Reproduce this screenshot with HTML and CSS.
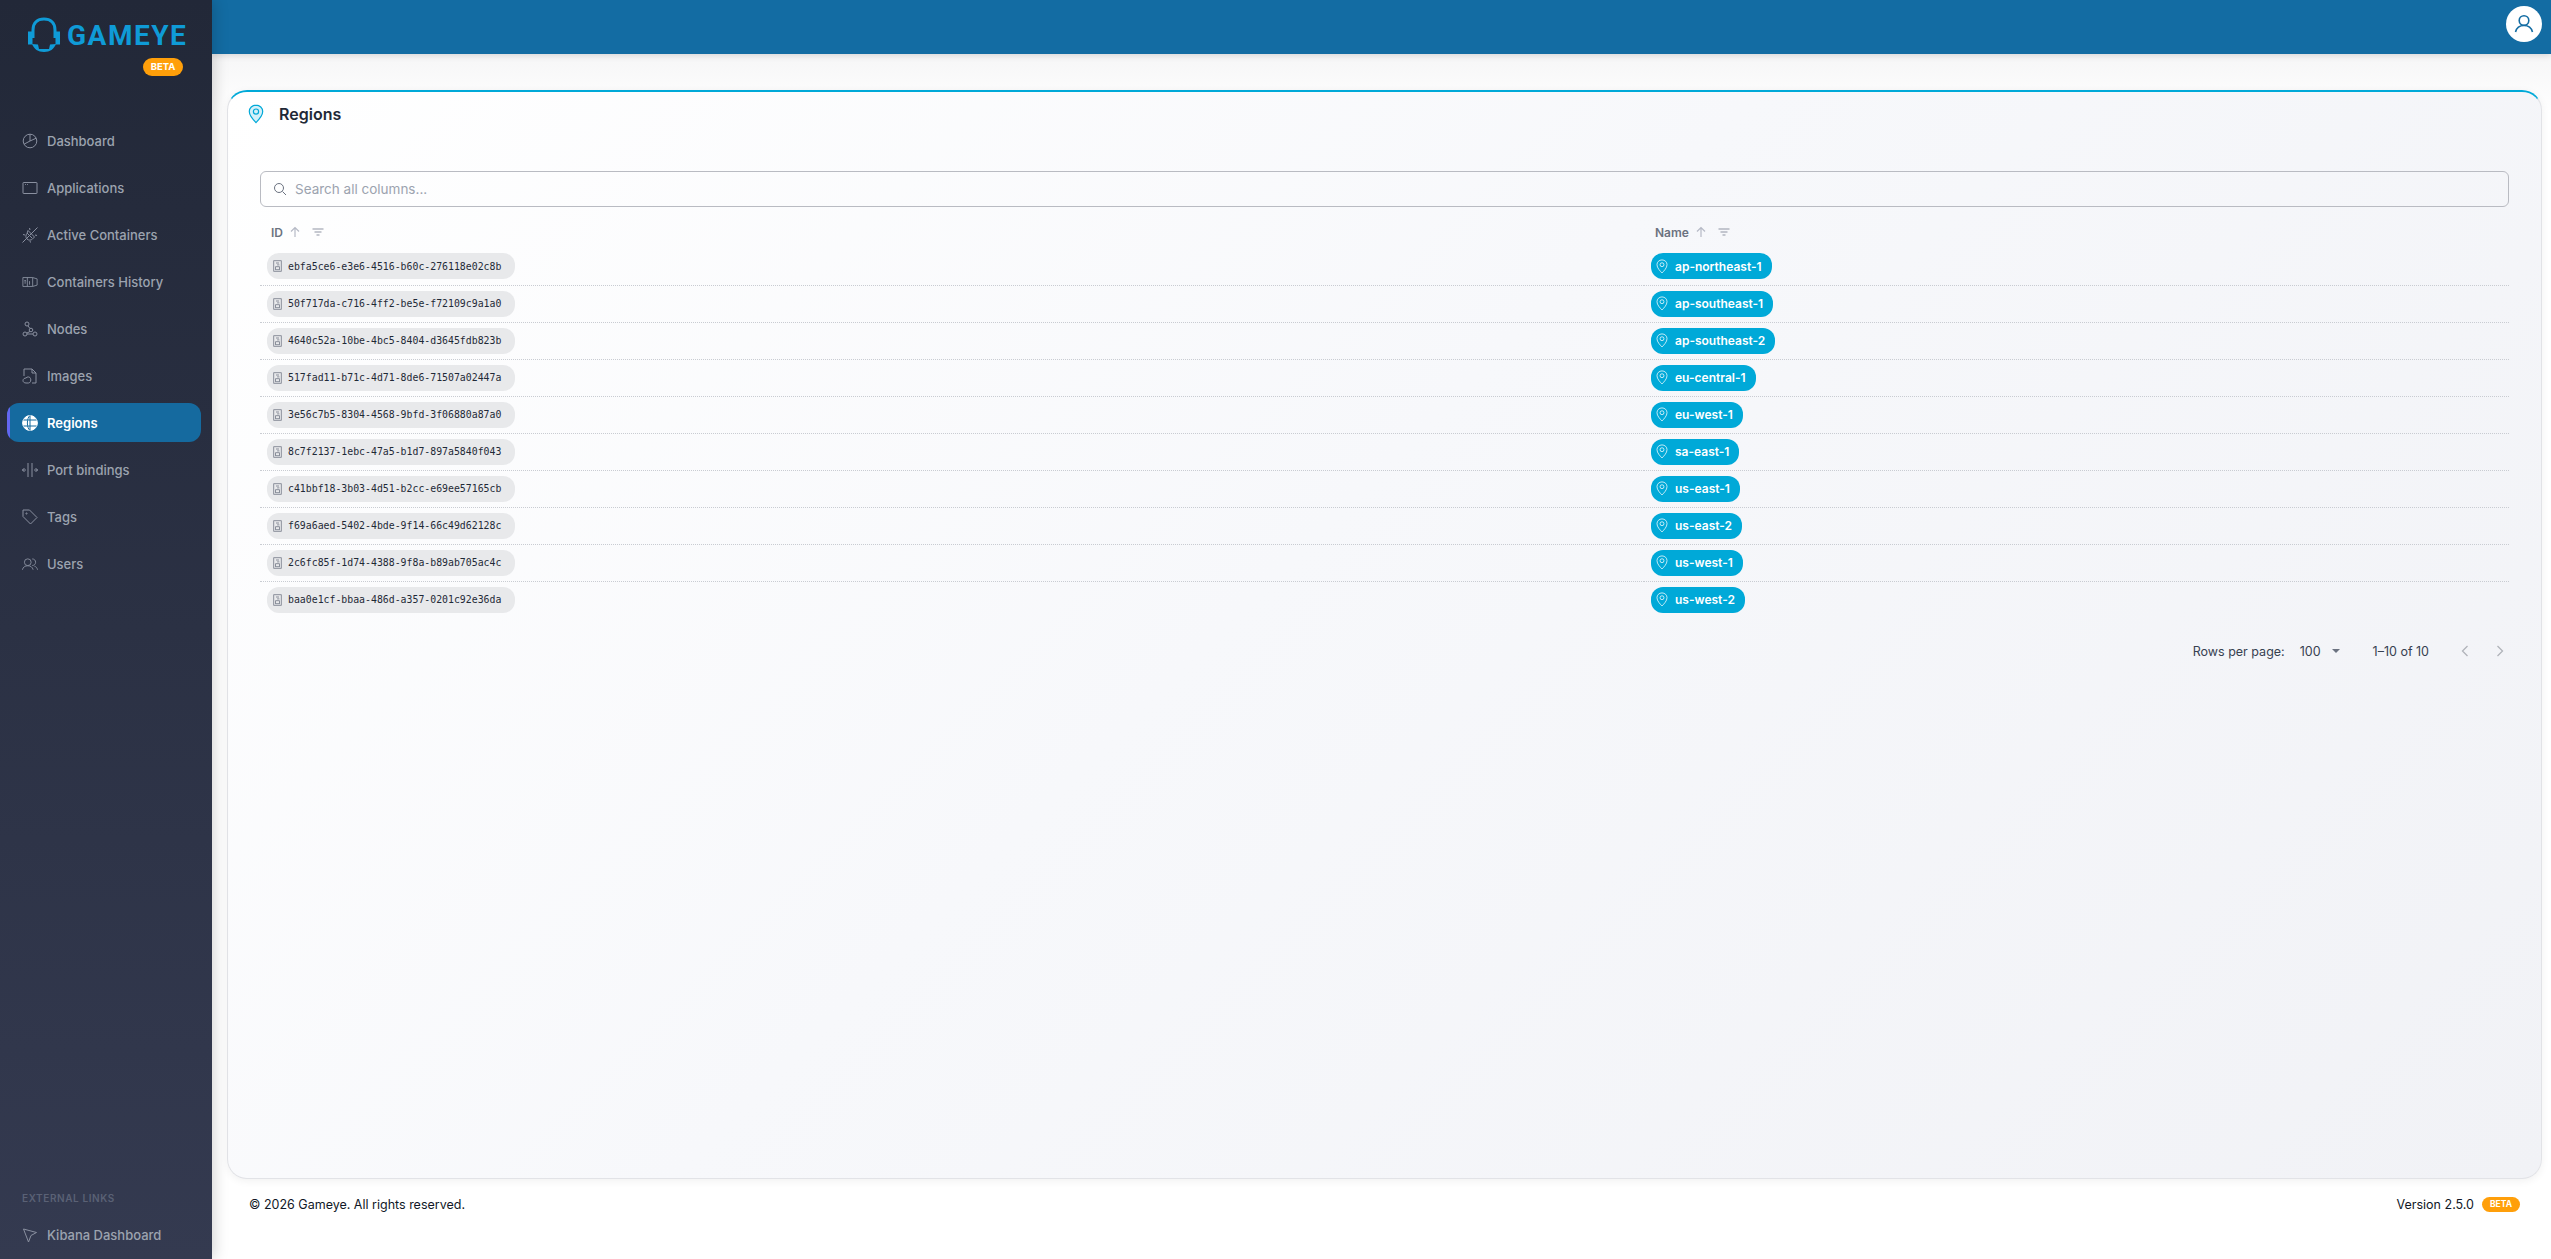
FILE: index.html
```html
<!DOCTYPE html>
<html lang="en">
<head>
    <meta charset="UTF-8">
    <meta name="viewport" content="width=device-width, initial-scale=1.0">
    <title>Regions - Gameye</title>
    <link rel="stylesheet" href="styles.css">
</head>
<body>
    <svg class="sprite" width="0" height="0">
        <symbol id="pin" viewBox="0 0 16 20">
            <path d="M8 1.2C4.2 1.2 1.3 4 1.3 7.6c0 4.2 4.2 8.500 6.700 11 2.500-2.500 6.700-6.800 6.700-11 0-3.600-2.900-6.400-6.700-6.400z"/>
            <circle cx="8" cy="7.600" r="2.600"/>
        </symbol>
        <symbol id="doc" viewBox="0 0 12 16">
            <rect x="1" y="1" width="10" height="14"/>
            <rect x="3.500" y="9" width="5" height="4"/>
            <path d="M4 4h4M5.500 6.500h3"/>
        </symbol>
    </svg>

    <div class="app">
        <aside class="sidebar">
            <div class="logo">
                <div class="logo-mark">
                    <svg width="34" height="37" viewBox="0 0 34 37" class="headset">
                        <path d="M6 21V13C6 6 10.500 2 17 2s11 4 11 11v8" fill="none" stroke="#0f9bd7" stroke-width="3"/>
                        <path d="M1 14.500h4.500v13H1zM28.500 14.500H33v13h-4.500z" fill="#0f9bd7"/>
                        <path d="M5 27c2 5 6 8 12 8s10-3 12-8l-6 .5-1 4.500H12l-1-4.500z" fill="#0f9bd7"/>
                    </svg>
                    <span class="logo-text">GAMEYE</span>
                </div>
                <span class="beta beta-top">BETA</span>
            </div>

            <nav class="nav">
                <a class="nav-item">
                    <svg viewBox="0 0 16 16"><circle cx="8" cy="8" r="6.800"/><path d="M8 1.200V8L2 11.200M8 8l6.200-2.800"/></svg>
                    Dashboard
                </a>
                <a class="nav-item">
                    <svg viewBox="0 0 16 16"><rect x="1" y="2.500" width="14" height="11" rx=".5"/><path d="M3 4.500h.8M5 4.500h.8"/></svg>
                    Applications
                </a>
                <a class="nav-item">
                    <svg viewBox="0 0 16 16"><path d="M.5 15.500l15-15M5 6l5 5M6 3.500l6.500 6.500-2 2c-1.500 1.500-4 1.500-5.500 0s-1.500-4 0-5.500zM7.500 1l.5 2M1 7.500l2 .5M8 14l.5 1.500M13 8l2 .5"/></svg>
                    Active Containers
                </a>
                <a class="nav-item">
                    <svg viewBox="0 0 18 16"><path d="M1 3h11l5 1.500v7L12 13H1zM6 3v10M12 3v10M3.500 6v4M2.500 7l1-1 1 1M8.500 7v4"/></svg>
                    Containers History
                </a>
                <a class="nav-item">
                    <svg viewBox="0 0 16 16"><circle cx="5" cy="3" r="2"/><circle cx="3" cy="13" r="2"/><circle cx="13" cy="13" r="2"/><circle cx="9" cy="9" r="1.800"/><path d="M6 5l2 2.500M5 13h6M8 10.500L5 12"/></svg>
                    Nodes
                </a>
                <a class="nav-item">
                    <svg viewBox="0 0 16 16"><path d="M2 8V1h8l4 4v10h-4M10 1v4h4"/><path d="M4 15c-1.800 0-3-1-3-2.400C1 11 2.500 10 4 10c1-1.500 4-1.500 4.500.5.800 1.500 0 4.500-2 4.500z"/></svg>
                    Images
                </a>
                <a class="nav-item active">
                    <svg viewBox="0 0 16 16"><circle class="globe" cx="8" cy="8" r="7.400"/><path class="globe-lines" d="M8 .6v14.800M1.500 5h13M1.500 11h13M8 .6C4.500 3 4.500 13 8 15.400"/></svg>
                    Regions
                </a>
                <a class="nav-item">
                    <svg viewBox="0 0 16 16"><path d="M6 1v14M10 1v14M0 8h4M12 8h4M2.500 6L.5 8l2 2M13.500 6l2 2-2 2"/></svg>
                    Port bindings
                </a>
                <a class="nav-item">
                    <svg viewBox="0 0 16 16"><path d="M1 1h6.500l7.500 7.500L8.500 15 1 7.500z"/><circle cx="4.500" cy="4.500" r=".6"/></svg>
                    Tags
                </a>
                <a class="nav-item">
                    <svg viewBox="0 0 18 16"><circle cx="6.500" cy="6" r="3.800"/><path d="M.5 14.500c.5-3 3-4.500 6-4.500s5.500 1.500 6 4.500M11.500 2.300c2.500 0 3.800 1.700 3.800 3.700s-1.300 3.700-3.800 3.700M14 10.500c2 .5 3 2 3.500 4"/></svg>
                    Users
                </a>
            </nav>

            <div class="external">
                <div class="external-title">External Links</div>
                <a class="nav-item">
                    <svg viewBox="0 0 16 16"><path d="M1.500 2l13 3.500-5.500 3L6.500 15z"/></svg>
                    Kibana Dashboard
                </a>
            </div>
        </aside>

        <div class="main">
            <header class="topbar">
                <div class="avatar">
                    <svg width="20" height="20" viewBox="0 0 20 20"><circle cx="10" cy="6.500" r="4.800"/><path d="M1.500 18c1-4 4.500-6.500 8.500-6.500s7.500 2.500 8.500 6.500"/></svg>
                </div>
            </header>

            <div class="content">
                <section class="card">
                    <div class="card-title">
                        <svg class="title-icon"><use href="#pin"/></svg>
                        <h1>Regions</h1>
                    </div>

                    <div class="search">
                        <svg width="14" height="14" viewBox="0 0 14 14"><circle cx="6" cy="6" r="4.500"/><path d="M9.500 9.500L13 13"/></svg>
                        <span>Search all columns...</span>
                    </div>

                    <table class="regions">
                        <thead>
                            <tr>
                                <th class="col-id">
                                    <span class="th-inner">ID
                                        <svg class="sort" viewBox="0 0 12 12"><path d="M6 11V1.500M2 5.500l4-4 4 4"/></svg>
                                        <svg class="filter" viewBox="0 0 12 12"><path d="M.5 3h11M2.500 6h7M4.500 9h3"/></svg>
                                    </span>
                                </th>
                                <th>
                                    <span class="th-inner">Name
                                        <svg class="sort" viewBox="0 0 12 12"><path d="M6 11V1.500M2 5.500l4-4 4 4"/></svg>
                                        <svg class="filter" viewBox="0 0 12 12"><path d="M.5 3h11M2.500 6h7M4.500 9h3"/></svg>
                                    </span>
                                </th>
                            </tr>
                        </thead>
                        <tbody>
                            <tr>
                                <td><span class="id-chip"><svg><use href="#doc"/></svg>ebfa5ce6-e3e6-4516-b60c-276118e02c8b</span></td>
                                <td><span class="name-chip"><svg><use href="#pin"/></svg>ap-northeast-1</span></td>
                            </tr>
                            <tr>
                                <td><span class="id-chip"><svg><use href="#doc"/></svg>50f717da-c716-4ff2-be5e-f72109c9a1a0</span></td>
                                <td><span class="name-chip"><svg><use href="#pin"/></svg>ap-southeast-1</span></td>
                            </tr>
                            <tr>
                                <td><span class="id-chip"><svg><use href="#doc"/></svg>4640c52a-10be-4bc5-8404-d3645fdb823b</span></td>
                                <td><span class="name-chip"><svg><use href="#pin"/></svg>ap-southeast-2</span></td>
                            </tr>
                            <tr>
                                <td><span class="id-chip"><svg><use href="#doc"/></svg>517fad11-b71c-4d71-8de6-71507a02447a</span></td>
                                <td><span class="name-chip"><svg><use href="#pin"/></svg>eu-central-1</span></td>
                            </tr>
                            <tr>
                                <td><span class="id-chip"><svg><use href="#doc"/></svg>3e56c7b5-8304-4568-9bfd-3f06880a87a0</span></td>
                                <td><span class="name-chip"><svg><use href="#pin"/></svg>eu-west-1</span></td>
                            </tr>
                            <tr>
                                <td><span class="id-chip"><svg><use href="#doc"/></svg>8c7f2137-1ebc-47a5-b1d7-897a5840f043</span></td>
                                <td><span class="name-chip"><svg><use href="#pin"/></svg>sa-east-1</span></td>
                            </tr>
                            <tr>
                                <td><span class="id-chip"><svg><use href="#doc"/></svg>c41bbf18-3b03-4d51-b2cc-e69ee57165cb</span></td>
                                <td><span class="name-chip"><svg><use href="#pin"/></svg>us-east-1</span></td>
                            </tr>
                            <tr>
                                <td><span class="id-chip"><svg><use href="#doc"/></svg>f69a6aed-5402-4bde-9f14-66c49d62128c</span></td>
                                <td><span class="name-chip"><svg><use href="#pin"/></svg>us-east-2</span></td>
                            </tr>
                            <tr>
                                <td><span class="id-chip"><svg><use href="#doc"/></svg>2c6fc85f-1d74-4388-9f8a-b89ab705ac4c</span></td>
                                <td><span class="name-chip"><svg><use href="#pin"/></svg>us-west-1</span></td>
                            </tr>
                            <tr>
                                <td><span class="id-chip"><svg><use href="#doc"/></svg>baa0e1cf-bbaa-486d-a357-0201c92e36da</span></td>
                                <td><span class="name-chip"><svg><use href="#pin"/></svg>us-west-2</span></td>
                            </tr>
                        </tbody>
                    </table>

                    <div class="pagination">
                        <span>Rows per page:</span>
                        <span class="per-page">100<i class="caret"></i></span>
                        <span class="range">1–10 of 10</span>
                        <svg class="chev" viewBox="0 0 8 12"><path d="M6.500 1L1.500 6l5 5"/></svg>
                        <svg class="chev" viewBox="0 0 8 12"><path d="M1.500 1l5 5-5 5"/></svg>
                    </div>
                </section>
            </div>

            <footer class="footer">
                <span>© 2026 Gameye. All rights reserved.</span>
                <span class="version">Version 2.5.0 <span class="beta beta-small">BETA</span></span>
            </footer>
        </div>
    </div>
</body>
</html>
```

FILE: styles.css
```css
* {
    margin: 0;
    padding: 0;
    box-sizing: border-box;
}
html, body {
    height: 100%;
    font-family: Inter, "Liberation Sans", sans-serif;
    background: #fff;
    overflow: hidden;
}
.sprite {
    position: absolute;
}
.app {
    display: flex;
    height: 100vh;
}

/* sidebar */
.sidebar {
    width: 212px;
    flex-shrink: 0;
    display: flex;
    flex-direction: column;
    background: linear-gradient(180deg, #222838 0%, #343a50 100%);
    box-shadow: 2px 0 14px rgba(0, 0, 0, 0.18);
    z-index: 2;
}
.logo {
    height: 118px;
    padding: 17px 29px 0 27px;
    display: flex;
    flex-direction: column;
    align-items: flex-end;
}
.logo-mark {
    display: flex;
    align-items: center;
    width: 100%;
    gap: 6px;
}
.headset {
    flex-shrink: 0;
}
.logo-text {
    color: #0f9bd7;
    font-family: Roboto, sans-serif;
    font-size: 28px;
    line-height: 28px;
    font-weight: 700;
    letter-spacing: 1.5px;
}
.beta {
    display: inline-block;
    background: #ff9f0a;
    color: #fff;
    font-weight: 700;
    border-radius: 10px;
    text-align: center;
}
.beta-top {
    width: 40px;
    height: 18px;
    line-height: 18px;
    font-size: 9.5px;
    margin-top: 4px;
}
.nav {
    flex: 1;
    display: flex;
    flex-direction: column;
    gap: 8px;
    padding: 3px 11px 0 7px;
}
.nav-item {
    position: relative;
    display: flex;
    align-items: center;
    gap: 9px;
    height: 39px;
    padding-left: 15px;
    border-radius: 12px;
    color: #9ca3af;
    font-size: 13px;
    font-weight: 500;
}
.nav-item svg {
    width: 16px;
    height: 16px;
    flex-shrink: 0;
    fill: none;
    stroke: #8a90a0;
    stroke-width: 1;
}
.nav-item.active {
    background: #156a9f;
    color: #fff;
    font-weight: 600;
    overflow: hidden;
}
.nav-item.active::before {
    content: '';
    position: absolute;
    left: 0;
    top: 0;
    bottom: 0;
    width: 3px;
    background: #6366f1;
}
.nav-item.active .globe {
    fill: #fff;
    stroke: #fff;
}
.nav-item.active .globe-lines {
    stroke: #156a9f;
}
.external {
    padding: 0 11px 5px 7px;
}
.external-title {
    padding-left: 15px;
    margin-bottom: 11px;
    color: #5a6175;
    font-size: 10px;
    font-weight: 600;
    letter-spacing: 0.6px;
    text-transform: uppercase;
}

/* main area */
.main {
    flex: 1;
    min-width: 0;
    display: flex;
    flex-direction: column;
}
.topbar {
    height: 54px;
    flex-shrink: 0;
    display: flex;
    align-items: center;
    justify-content: flex-end;
    padding: 0 9px 6px 0;
    background: #136ca3;
    box-shadow: 0 2px 6px rgba(0, 0, 0, 0.12);
    z-index: 1;
}
.avatar {
    width: 36px;
    height: 36px;
    border-radius: 50%;
    background: #fff;
    display: flex;
    align-items: center;
    justify-content: center;
}
.avatar svg {
    fill: none;
    stroke: #136ca3;
    stroke-width: 1.6;
}
.content {
    flex: 1;
    min-height: 0;
    padding: 36px 9px 0 15px;
    background: linear-gradient(180deg, #f6f6f7 0%, #fff 60px);
}
.card {
    height: 100%;
    padding: 0 32px 0 32px;
    border: 1px solid #e2e3e7;
    border-top: 2px solid #00a9d8;
    border-radius: 20px;
    background: linear-gradient(135deg, #ffffff 0%, #f7f8fb 45%, #f1f2f6 100%);
    box-shadow: 0 2px 8px rgba(0, 0, 0, 0.06);
}
.card-title {
    display: flex;
    align-items: center;
    gap: 15px;
    height: 44px;
    margin-left: -12px;
}
.title-icon {
    width: 16px;
    height: 20px;
    fill: #d4f0f9;
    stroke: #00a9d8;
    stroke-width: 1.2;
}
h1 {
    font-size: 16px;
    font-weight: 600;
    color: #1f2937;
}
.search {
    display: flex;
    align-items: center;
    gap: 8px;
    height: 36px;
    margin-top: 35px;
    padding-left: 12px;
    border: 1px solid #b9bbc2;
    border-radius: 6px;
    color: #9ca3af;
    font-size: 13.500px;
}
.search svg {
    fill: none;
    stroke: #6b7280;
    stroke-width: 1;
}

/* table */
.regions {
    width: 100%;
    margin-top: 9px;
    border-collapse: collapse;
    table-layout: fixed;
}
.col-id {
    width: 1384px;
}
th {
    height: 32px;
    padding-left: 11px;
    text-align: left;
    color: #6b7280;
    font-size: 12px;
    font-weight: 600;
}
.th-inner {
    display: flex;
    align-items: center;
}
.sort {
    width: 12px;
    height: 12px;
    margin-left: 6px;
    fill: none;
    stroke: #b6bac6;
    stroke-width: 1.2;
}
.filter {
    width: 12px;
    height: 12px;
    margin-left: 11px;
    fill: none;
    stroke: #8f94a3;
    stroke-width: 1;
}
tbody tr {
    height: 37px;
    border-bottom: 1px dotted #c9ccd2;
}
tbody tr:last-child {
    border-bottom: none;
}
td {
    padding-left: 7px;
    vertical-align: middle;
}
.id-chip,
.name-chip {
    display: inline-flex;
    align-items: center;
    height: 26px;
    border-radius: 12px;
    vertical-align: middle;
}
.id-chip {
    width: 248px;
    padding-left: 6px;
    gap: 6px;
    background: #e8e9eb;
    color: #1f2937;
    font-family: "DejaVu Sans Mono", monospace;
    font-size: 9.850px;
}
.id-chip svg {
    width: 9px;
    height: 12px;
    fill: none;
    stroke: #6b7280;
    stroke-width: 1;
}
.name-chip {
    padding: 0 10px 0 5px;
    gap: 7px;
    background: #00a9d8;
    color: #fff;
    font-size: 12px;
    font-weight: 600;
}
.name-chip svg {
    width: 12px;
    height: 15px;
    fill: none;
    stroke: #fff;
    stroke-width: 1;
}
.pagination {
    display: flex;
    align-items: center;
    justify-content: flex-end;
    height: 52px;
    margin-top: 7px;
    padding-right: 5px;
    color: #374151;
    font-size: 12.500px;
}
.per-page {
    display: flex;
    align-items: center;
    margin-left: 15px;
}
.caret {
    width: 0;
    height: 0;
    margin-left: 11px;
    border-left: 4px solid transparent;
    border-right: 4px solid transparent;
    border-top: 4px solid #6b7280;
}
.range {
    margin-left: 33px;
    margin-right: 32px;
}
.chev {
    width: 8px;
    height: 12px;
    fill: none;
    stroke: #b0b3ba;
    stroke-width: 1.300;
}
.chev + .chev {
    margin-left: 27px;
}

/* footer */
.footer {
    height: 80px;
    flex-shrink: 0;
    display: flex;
    justify-content: space-between;
    align-items: flex-start;
    padding: 18px 31px 0 37px;
    color: #111827;
    font-size: 12.500px;
}
.version {
    display: flex;
    align-items: center;
    gap: 8px;
}
.beta-small {
    width: 38px;
    height: 15px;
    line-height: 15px;
    font-size: 8.500px;
}
```
